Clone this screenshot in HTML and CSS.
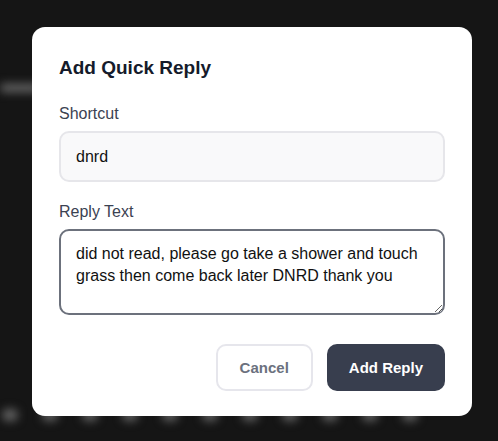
FILE: index.html
```html
<!DOCTYPE html>
<html lang="en">
<head>
    <meta charset="UTF-8">
    <meta name="viewport" content="width=device-width, initial-scale=1.0">
    <title>Add Quick Reply</title>
    <link rel="stylesheet" href="styles.css">
</head>
<body>

    <div class="app">
        <div class="app-row app-row-top">
            <span class="ghost ghost-wide"></span>
        </div>
        <div class="app-row app-row-bottom">
            <span class="ghost"></span>
            <span class="ghost"></span>
            <span class="ghost"></span>
            <span class="ghost"></span>
            <span class="ghost"></span>
            <span class="ghost"></span>
            <span class="ghost"></span>
            <span class="ghost"></span>
            <span class="ghost"></span>
            <span class="ghost"></span>
            <span class="ghost"></span>
        </div>
    </div>

    <div class="overlay">
        <form class="modal" id="quickReplyForm">
            <h2 class="modal-title">Add Quick Reply</h2>

            <div class="field">
                <label for="shortcut">Shortcut</label>
                <input type="text" id="shortcut" class="input" value="dnrd">
            </div>

            <div class="field">
                <label for="replyText">Reply Text</label>
                <textarea id="replyText" class="input textarea">did not read, please go take a shower and touch grass then come back later DNRD thank you</textarea>
            </div>

            <div class="actions">
                <button type="button" class="btn btn-cancel">Cancel</button>
                <button type="submit" class="btn btn-primary">Add Reply</button>
            </div>
        </form>
    </div>

</body>
</html>
```

FILE: styles.css
```css
* {
    box-sizing: border-box;
}

body {
    font-family: "Liberation Sans", Arial, sans-serif;
    background-color: #151515;
    margin: 0;
    padding: 0;
    height: 100vh;
    overflow: hidden;
}

/* blurred app behind the dialog */
.app {
    height: 100vh;
    display: flex;
    flex-direction: column;
    justify-content: space-between;
    padding: 84px 0 20px;
    filter: blur(5px);
}

.app-row {
    display: flex;
    align-items: center;
}

.app-row-bottom {
    gap: 24px;
    padding-left: 2px;
}

.ghost {
    width: 16px;
    height: 12px;
    border-radius: 6px;
    background-color: #666;
}

.ghost-wide {
    width: 40px;
    height: 8px;
    background-color: #6a6a6a;
}

.overlay {
    position: fixed;
    inset: 0;
    display: flex;
    justify-content: center;
    padding: 27px 0 0 6px;
}

.modal {
    width: 440px;
    height: 389px;
    background-color: #fff;
    border-radius: 13px;
    padding: 27px 27px 25px;
}

.modal-title {
    margin: 0 0 22px;
    font-size: 19px;
    line-height: 28px;
    font-weight: 700;
    color: #151b2b;
}

.field {
    margin-bottom: 20px;
}

label {
    display: block;
    font-size: 16px;
    line-height: 20px;
    color: #3b4252;
    margin-bottom: 7px;
}

.input {
    display: block;
    width: 100%;
    height: 51px;
    padding: 0 15px;
    font-family: inherit;
    font-size: 16px;
    line-height: 22px;
    color: #111;
    background-color: #f9f9fa;
    border: 2px solid #e6e6ea;
    border-radius: 10px;
    outline: none;
}

.textarea {
    height: 86px;
    padding: 12px 15px;
    resize: vertical;
    background-color: #fff;
    border-color: #6c717c;
}

.actions {
    display: flex;
    justify-content: flex-end;
    gap: 14px;
    margin-top: 29px;
}

.btn {
    height: 47px;
    padding: 0 22px;
    font-family: inherit;
    font-size: 15px;
    font-weight: 700;
    border-radius: 10px;
    cursor: pointer;
}

.btn-cancel {
    background-color: #fff;
    color: #6b717e;
    border: 2px solid #e6e6ec;
}

.btn-primary {
    background-color: #383e4e;
    color: #fff;
    border: none;
}
```
